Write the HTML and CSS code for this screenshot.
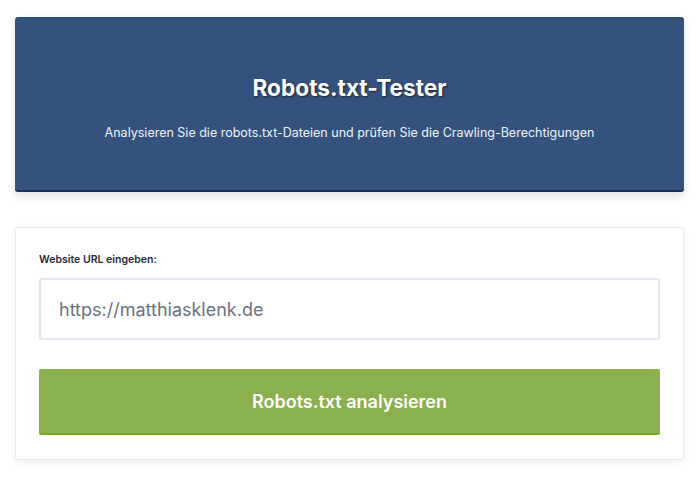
FILE: index.html
```html
<!DOCTYPE html>
<html lang="de">
<head>
<meta charset="utf-8">
<link rel="stylesheet" href="styles.css">
</head>
<body>
<div class="page">
  <header class="hero">
    <h1 class="hero-title">Robots.txt-Tester</h1>
    <p class="hero-sub">Analysieren Sie die robots.txt-Dateien und prüfen Sie die Crawling-Berechtigungen</p>
  </header>
  <section class="card">
    <label class="field-label" for="url">Website URL eingeben:</label>
    <input class="field-input" id="url" type="text" placeholder="https://matthiasklenk.de">
    <button class="btn" type="button">Robots.txt analysieren</button>
  </section>
</div>
</body>
</html>
```
FILE: styles.css
```css
* { box-sizing: border-box; }
html, body { margin: 0; padding: 0; background: #ffffff; }
body { font-family: Inter, "Noto Sans", sans-serif; color: #1f2937; }
.page {
  padding: 17px 16px 20px 15px;
  display: flex;
  flex-direction: column;
  gap: 35px;
}
.hero {
  background: #34527d;
  border-radius: 3px;
  border-bottom: 2px solid #17305e;
  box-shadow: 0 4px 10px rgba(0,0,0,0.12);
  height: 175px;
  display: flex;
  flex-direction: column;
  align-items: center;
  padding-top: 57px;
  color: #ffffff;
}
.hero-title {
  margin: 0;
  font-size: 22.7px;
  font-weight: 700;
  line-height: 28px;
  text-shadow: 1px 1px 2px rgba(0,0,0,0.6);
}
.hero-sub {
  margin: 23px 0 0;
  font-size: 12.5px;
  line-height: 16px;
  color: #eef2f8;
}
.card {
  border: 1px solid #e6e9ef;
  border-radius: 3px;
  box-shadow: 0 2px 8px rgba(0,0,0,0.07);
  padding: 24px 23px 24px;
  display: flex;
  flex-direction: column;
}
.field-label {
  font-size: 10.5px;
  font-weight: 600;
  line-height: 16px;
  color: #1f2937;
  margin-bottom: 10px;
}
.field-input {
  height: 62px;
  border: 2px solid #e3e8f0;
  border-radius: 2px;
  padding: 0 18px;
  font-family: Inter, "Noto Sans", sans-serif;
  font-size: 18px;
  color: #374151;
  outline: none;
}
.field-input::placeholder { color: #6b7280; }
.btn {
  margin-top: 29px;
  height: 66px;
  background: #8bb050;
  border: none;
  border-bottom: 2px solid #76ac1c;
  border-radius: 2px;
  color: #ffffff;
  font-family: Inter, "Noto Sans", sans-serif;
  font-size: 18px;
  font-weight: 600;
}
```
